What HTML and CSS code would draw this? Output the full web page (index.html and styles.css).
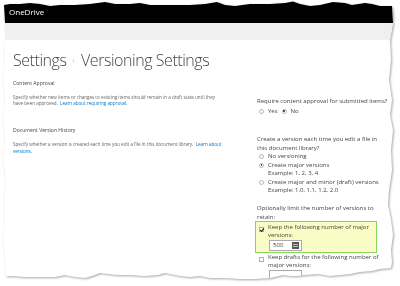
FILE: index.html
```html
<!DOCTYPE html>
<html lang="en">
<head>
<meta charset="utf-8">
<title>Versioning Settings</title>
<link rel="stylesheet" href="styles.css">
</head>
<body>
<div class="sheet">
  <div class="paper">
    <header class="suite">OneDrive</header>
    <div class="ribbon"></div>
    <main class="content">
      <h1 class="title">Settings<span class="sep">›</span>Versioning Settings</h1>

      <section class="row row-approval">
        <div class="info">
          <h2 class="label">Content Approval</h2>
          <p class="desc">Specify whether new items or changes to existing items should remain in a draft state until they<br>have been approved.&nbsp; <a href="#">Learn about requiring approval.</a></p>
        </div>
        <div class="ctrl ctrl-approval">
          <p>Require content approval for submitted items?</p>
          <div class="inline-opts">
            <span class="opt"><span class="radio"></span>Yes</span>
            <span class="opt"><span class="radio on"></span>No</span>
          </div>
        </div>
      </section>

      <section class="row row-version">
        <div class="info">
          <h2 class="label">Document Version History</h2>
          <p class="desc">Specify whether a version is created each time you edit a file in this document library.&nbsp; <a href="#">Learn about</a><br><a href="#">versions.</a></p>
        </div>
        <div class="ctrl ctrl-version">
          <p>Create a version each time you edit a file in<br>this document library?</p>
          <div class="choice"><span class="radio"></span><div>No versioning</div></div>
          <div class="choice"><span class="radio on"></span><div>Create major versions<br>Example: 1, 2, 3, 4</div></div>
          <div class="choice"><span class="radio"></span><div>Create major and minor (draft) versions<br>Example: 1.0, 1.1, 1.2, 2.0</div></div>
          <p class="limit">Optionally limit the number of versions to<br>retain:</p>
          <div class="highlight">
            <div class="choice">
              <span class="check on"><svg viewBox="0 0 6 6" width="6" height="6"><path d="M1.2 3.1 L2.5 4.4 L4.9 1.4" fill="none" stroke="#222" stroke-width="1.1"/></svg></span>
              <div>Keep the following number of major<br>versions:
                <div class="field"><span>500</span><svg class="kbd" viewBox="0 0 7 7" width="7" height="7"><rect x="0" y="0" width="7" height="7" fill="#555"/><path d="M1 2.5 H6 M1 4.5 H6" stroke="#ddd" stroke-width="0.8"/></svg></div>
              </div>
            </div>
          </div>
          <div class="choice">
            <span class="check"></span>
            <div>Keep drafts for the following number of<br>major versions:
              <div class="field empty"></div>
            </div>
          </div>
        </div>
      </section>
    </main>
  </div>
</div>
</body>
</html>
```

FILE: styles.css
```css
* { box-sizing: border-box; margin: 0; padding: 0; }
html, body { width: 400px; height: 286px; overflow: hidden; background: #fff; }
body { font-family: "Open Sans", "Noto Sans", sans-serif; color: #444; }

.sheet {
  width: 400px;
  height: 286px;
  filter: drop-shadow(1px 1px 1.2px rgba(0, 0, 0, 0.35));
}
.paper {
  width: 400px;
  height: 286px;
  background: #fff;
  overflow: hidden;
  clip-path: polygon(
    4px 5px, 10px 4px, 20px 4px, 30px 3px, 40px 4px, 50px 6px, 60px 5px, 75px 5px, 90px 4px,
    105px 2px, 115px 4px, 130px 4px, 140px 3px, 150px 5px, 170px 5px, 190px 5px, 205px 4px,
    217px 2px, 225px 5px, 235px 6px, 250px 4px, 270px 4px, 285px 3px, 293px 1.5px, 300px 4px,
    310px 6px, 320px 5px, 333px 2px, 345px 3px, 352px 5px, 365px 3px, 372px 4px, 380px 6px, 392px 6px,
    393px 23px, 390px 40px, 391px 60px, 389px 80px, 392px 100px, 390px 115px, 393px 130px,
    391px 150px, 392px 170px, 389px 190px, 388px 205px, 391px 220px, 393px 235px, 391px 250px,
    392px 262px, 391px 268px,
    380px 269px, 372px 271px, 360px 272px, 350px 274px, 340px 275px, 330px 276px, 318px 274px,
    305px 275px, 295px 276px, 282px 275px, 270px 278px, 255px 279px, 240px 279px, 225px 278px,
    210px 278px, 200px 276px, 190px 277px, 180px 276px, 170px 274px, 165px 273px, 158px 275px,
    145px 276px, 130px 275px, 118px 275px, 108px 274px, 100px 273px, 92px 276px, 85px 278px,
    75px 277px, 65px 275px, 55px 277px, 40px 277px, 25px 277px, 12px 276px, 6px 276px,
    5px 260px, 3px 240px, 5px 220px, 4px 200px, 6px 180px, 3px 160px, 5px 140px, 3px 120px,
    5px 100px, 3px 80px, 5px 60px, 4px 45px, 6px 40px, 5px 23px
  );
}

.suite {
  height: 23px;
  background: #000;
  color: #fff;
  font-size: 8px;
  line-height: 8px;
  padding: 8px 0 0 9px;
}
.ribbon { height: 17px; background: #f0f0f0; }

.content { padding-left: 13px; }

.title {
  margin-top: 8px;
  font-size: 16px;
  line-height: 24px;
  font-weight: 300;
  letter-spacing: -0.45px;
  color: #444;
  white-space: nowrap;
}
.sep {
  display: inline-block;
  font-size: 8px;
  color: #999;
  margin: 0 7px 0 6px;
  vertical-align: 3px;
}

.row {
  display: grid;
  grid-template-columns: 222px 1fr;
  column-gap: 22px;
  white-space: nowrap;
}
.row-approval { margin-top: 8px; }
.row-version { margin-top: 12px; }

.label {
  font-size: 5.1px;
  line-height: 7px;
  font-weight: 400;
  color: #444;
}
.desc {
  margin-top: 6.7px;
  font-size: 4.55px;
  line-height: 6.6px;
  color: #666;
}
a { color: #0072c6; text-decoration: none; }

.ctrl { font-size: 6px; line-height: 8.5px; color: #444; }
.ctrl-approval { padding-top: 16.75px; }
.ctrl-version { padding-top: 8px; }

.inline-opts { display: flex; gap: 4px; margin-top: 1.5px; padding-left: 2px; }
.opt { display: flex; align-items: center; gap: 4px; }

.radio {
  display: inline-block;
  flex: none;
  width: 5px;
  height: 5px;
  border: 0.8px solid #b5b5b5;
  border-radius: 50%;
  background: #fff;
  position: relative;
}
.radio.on::after {
  content: "";
  position: absolute;
  left: 0.9px;
  top: 0.9px;
  width: 1.6px;
  height: 1.6px;
  border-radius: 50%;
  background: #333;
}

.choice {
  display: flex;
  align-items: flex-start;
  gap: 4px;
  padding-left: 2px;
}
.choice > .radio { margin-top: 1.75px; }

.check {
  display: inline-block;
  flex: none;
  width: 5px;
  height: 5px;
  margin-top: 4px;
  border: 0.8px solid #b0b0b0;
  background: #fff;
  position: relative;
}
.check svg { position: absolute; left: -1px; top: -1px; }

.limit { margin-top: 9.5px; }

.highlight {
  margin-left: -2px;
  width: 122px;
  border: 1px solid #84d860;
  background: #fbfbc6;
  padding: 0.5px 0 1px 2px;
}
.highlight .choice { padding-left: 1px; }

.field {
  position: relative;
  margin-left: 1px;
  width: 33px;
  height: 11px;
  border: 1px solid #ababab;
  background: #fff;
  font-size: 6px;
  line-height: 9px;
  padding-left: 3px;
}
.field .kbd { position: absolute; right: 2px; top: 1px; }
.field.empty { height: 12px; }
```
